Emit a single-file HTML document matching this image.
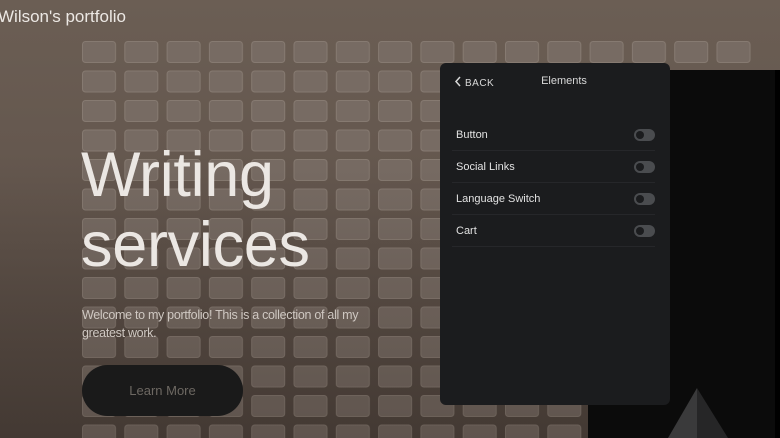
<!DOCTYPE html>
<html><head><meta charset="utf-8"><style>
*{margin:0;padding:0;box-sizing:border-box}
body{width:780px;height:438px;overflow:hidden;position:relative;background:#6a5d53;font-family:"Liberation Sans",sans-serif}
.bg{position:absolute;inset:0;background:linear-gradient(180deg,#6b5e54 0%,#64574e 40%,#4f443d 100%)}
svg.grid{position:absolute;left:0;top:0}
.shade{position:absolute;inset:0;background:linear-gradient(180deg,rgba(0,0,0,0) 0%,rgba(0,0,0,0) 35%,rgba(40,32,28,0.3) 100%)}
.logo{position:absolute;left:-2px;top:7px;color:#ece8e4;font-size:17px}
h1{position:absolute;left:81px;top:140px;color:#ebe7e3;font-size:63px;font-weight:normal;line-height:70px;letter-spacing:-0.3px}
.desc{position:absolute;left:82px;top:306px;width:300px;color:#cfc8c2;font-size:12.5px;line-height:18px;letter-spacing:-0.3px}
.btn{position:absolute;left:82px;top:365px;width:161px;height:51px;border-radius:26px;background:#1a1a1a;color:#6d6862;font-size:13px;text-align:center;line-height:51px}
.dark{position:absolute;left:588px;top:70px;width:192px;height:368px;background:#0b0b0b}
.edge{position:absolute;left:775px;top:70px;width:5px;height:368px;background:#000}
.panel{position:absolute;left:440px;top:63px;width:230px;height:342px;background:#1b1c1e;border-radius:6px}
.back{position:absolute;left:14px;top:13px;color:#d8d8d8;font-size:10px;letter-spacing:.5px}
.title{position:absolute;left:0;right:0;top:12px;text-align:center;color:#d8d8d8;font-size:11px;padding-left:18px}
.row{position:absolute;left:12px;width:203px;height:32px;border-bottom:1px solid #26272a;color:#e2e2e2;font-size:11px}
.row span{position:absolute;left:4px;top:10px}
.tg{position:absolute;right:0;top:10px;width:21px;height:12px;border-radius:6px;background:#4a4c4f}
.tg:after{content:"";position:absolute;left:2px;top:2px;width:8px;height:8px;border-radius:50%;background:#1b1c1e}
</style></head><body>
<div class="bg"></div>
<svg class="grid" width="780" height="438"><defs><pattern id="p" x="82" y="41" width="42.3" height="29.5" patternUnits="userSpaceOnUse"><rect x="0.5" y="0.5" width="33" height="21" rx="3" fill="#776b63" stroke="#867a71" stroke-width="1"/></pattern></defs><rect x="82" y="41" width="676" height="397" fill="url(#p)"/></svg>
<div class="shade"></div>
<div class="logo">Wilson's portfolio</div>
<h1>Writing<br>services</h1>
<div class="desc">Welcome to my portfolio! This is a collection of all my greatest work.</div>
<div class="btn">Learn More</div>
<div class="dark"></div>
<div class="edge"></div>
<svg style="position:absolute;left:660px;top:385px" width="80" height="53"><polygon points="37,3 8,53 37,53" fill="#3a3a3b"/><polygon points="37,3 37,53 68,53" fill="#262627"/></svg>
<div class="panel">
<div class="back"><svg width="8" height="11" style="vertical-align:-1px;margin-right:3px"><path d="M6 1 L2 5.5 L6 10" stroke="#d8d8d8" stroke-width="1.5" fill="none"/></svg>BACK</div>
<div class="title">Elements</div>
<div class="row" style="top:56px"><span>Button</span><div class="tg"></div></div>
<div class="row" style="top:88px"><span>Social Links</span><div class="tg"></div></div>
<div class="row" style="top:120px"><span>Language Switch</span><div class="tg"></div></div>
<div class="row" style="top:152px"><span>Cart</span><div class="tg"></div></div>
</div>
</body></html>
